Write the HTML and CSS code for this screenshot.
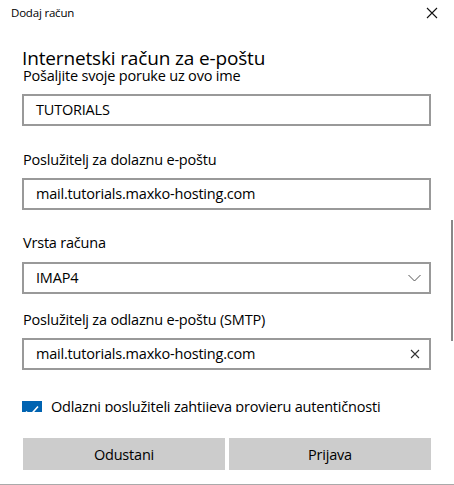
FILE: index.html
```html
<!DOCTYPE html>
<html lang="hr">
  <head>
    <meta charset="UTF-8" />
    <title>Dodaj račun</title>
    <link rel="stylesheet" href="styles.css">
  </head>
  <body>
    <div class="window">
      <div class="titlebar">
        <span class="title">Dodaj račun</span>
        <svg class="close" width="12" height="12" viewBox="0 0 12 12">
          <path d="M1 1 L11 11 M11 1 L1 11" stroke="#111" stroke-width="1.1" fill="none" />
        </svg>
      </div>

      <div class="scroll">
        <h1>Internetski račun za e-poštu</h1>
        <p class="subtitle">Pošaljite svoje poruke uz ovo ime</p>
        <div class="field first">TUTORIALS</div>

        <label class="label incoming">Poslužitelj za dolaznu e-poštu</label>
        <div class="field">mail.tutorials.maxko-hosting.com</div>

        <label class="label type">Vrsta računa</label>
        <div class="field select">
          <span>IMAP4</span>
          <svg width="13" height="8" viewBox="0 0 13 8">
            <path d="M0.5 1 L6.5 7 L12.5 1" stroke="#555" stroke-width="1" fill="none" />
          </svg>
        </div>

        <label class="label outgoing">Poslužitelj za odlaznu e-poštu (SMTP)</label>
        <div class="field clearable">
          <span>mail.tutorials.maxko-hosting.com</span>
          <svg width="10" height="10" viewBox="0 0 10 10">
            <path d="M1 1 L9 9 M9 1 L1 9" stroke="#333" stroke-width="1.1" fill="none" />
          </svg>
        </div>

        <div class="check">
          <span class="box">
            <svg width="20" height="20" viewBox="0 0 20 20">
              <path d="M4 10.5 L8 14.5 L16 5.5" stroke="#fff" stroke-width="1.6" fill="none" />
            </svg>
          </span>
          <span class="check-text">Odlazni poslužitelj zahtijeva provjeru autentičnosti</span>
        </div>

        <div class="scrollbar"></div>
      </div>

      <div class="buttons">
        <button class="btn">Odustani</button>
        <button class="btn">Prijava</button>
      </div>
    </div>
  </body>
</html>
```

FILE: styles.css
```css
html, body {
  margin: 0;
  background: #fff;
}
body {
  font-family: "Open Sans", "Noto Sans", sans-serif;
  color: #000;
}
.window {
  width: 454px;
  height: 485px;
  box-sizing: border-box;
  border-bottom: 1px solid #aaa;
  display: flex;
  flex-direction: column;
}
.titlebar {
  height: 30px;
  box-sizing: border-box;
  display: flex;
  align-items: flex-start;
  justify-content: space-between;
  padding: 6px 16px 0 11px;
}
.title {
  font-size: 11.5px;
  line-height: 14px;
  letter-spacing: -0.2px;
}
.close {
  display: block;
  margin-top: 1px;
}
.scroll {
  height: 382px;
  overflow: hidden;
  padding: 0 23px 0 22px;
}
h1 {
  font-size: 19px;
  font-weight: 400;
  line-height: 19px;
  margin: 19px 0 0 0;
  letter-spacing: -0.15px;
}
.subtitle {
  font-size: 14.5px;
  line-height: 15px;
  margin: 0 0 0 1px;
  letter-spacing: -0.2px;
}
.label {
  display: block;
  font-size: 14.5px;
  line-height: 18px;
  margin-left: 1px;
  letter-spacing: -0.2px;
}
.incoming {
  margin-top: 25px;
}
.type {
  margin-top: 24px;
}
.outgoing {
  margin-top: 17px;
}
.field {
  box-sizing: border-box;
  height: 32px;
  border: 2px solid #999;
  margin-top: 9px;
  padding: 0 12px;
  font-size: 14.5px;
  line-height: 28px;
  letter-spacing: -0.2px;
  display: flex;
  align-items: center;
  justify-content: space-between;
}
.field.first {
  margin-top: 11px;
}
.select {
  margin-top: 10px;
  padding-right: 8px;
}
.clearable {
  padding-right: 9px;
}
.check {
  display: flex;
  align-items: flex-start;
  gap: 9px;
  margin-top: 31px;
  font-size: 14.5px;
  line-height: 18px;
  letter-spacing: -0.2px;
}
.check-text {
  margin-top: -3px;
  white-space: nowrap;
}
.box {
  width: 20px;
  height: 20px;
  background: #0063b1;
  display: block;
  flex: none;
}
.box svg {
  display: block;
}
.scrollbar {
  position: absolute;
  left: 451px;
  top: 220px;
  width: 2px;
  height: 121px;
  background: #888;
}
.buttons {
  display: flex;
  gap: 4px;
  padding: 26px 23px 0 23px;
}
.btn {
  flex: 1;
  height: 32px;
  border: none;
  background: #ccc;
  font-family: inherit;
  font-size: 14.5px;
  color: #000;
  letter-spacing: -0.2px;
}
```
